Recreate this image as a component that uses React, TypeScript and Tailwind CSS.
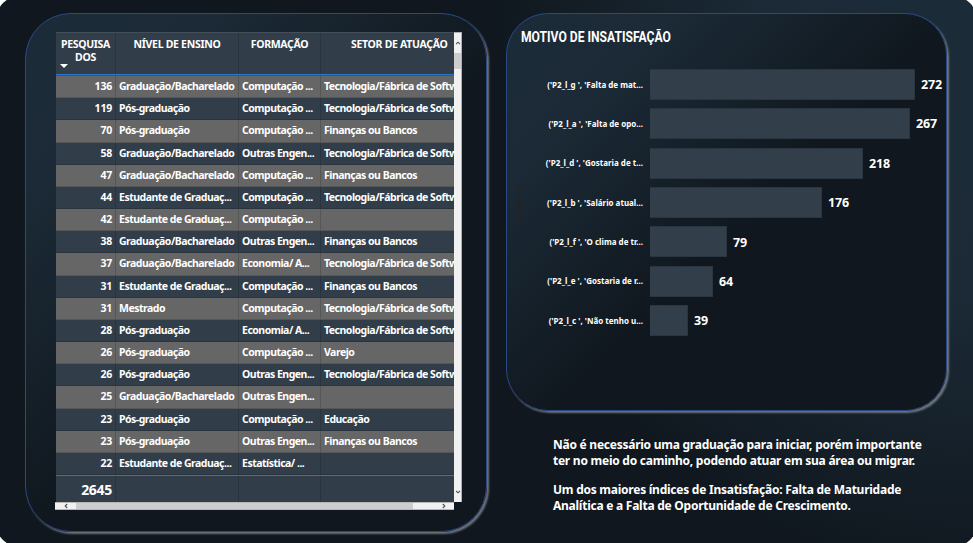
import React from "react";

type Row = [string, string, string, string];

const G = "Graduação/Bacharelado";
const P = "Pós-graduação";
const E = "Estudante de Graduaç...";
const C = "Computação ...";
const O = "Outras Engen...";
const T = "Tecnologia/Fábrica de Softw";
const F = "Finanças ou Bancos";

const rows: Row[] = [
  ["136", G, C, T],
  ["119", P, C, T],
  ["70", P, C, F],
  ["58", G, O, T],
  ["47", G, C, F],
  ["44", E, C, T],
  ["42", E, C, ""],
  ["38", G, O, F],
  ["37", G, "Economia/ A...", T],
  ["31", E, C, F],
  ["31", "Mestrado", C, T],
  ["28", P, "Economia/ A...", T],
  ["26", P, C, "Varejo"],
  ["26", P, O, T],
  ["25", G, O, ""],
  ["23", P, C, "Educação"],
  ["23", P, O, F],
  ["22", E, "Estatística/ ...", ""],
];

const bars = [
  { label: "('P2_l_g ', 'Falta de mat...", value: 272, width: 265 },
  { label: "('P2_l_a ', 'Falta de opo...", value: 267, width: 260 },
  { label: "('P2_l_d ', 'Gostaria de t...", value: 218, width: 213 },
  { label: "('P2_l_b ', 'Salário atual...", value: 176, width: 172 },
  { label: "('P2_l_f ', 'O clima de tr...", value: 79, width: 77 },
  { label: "('P2_l_e ', 'Gostaria de r...", value: 64, width: 63 },
  { label: "('P2_l_c ', 'Não tenho u...", value: 39, width: 38 },
];

const grid = "grid grid-cols-[60px_123px_82px_133px]";
const line = "border-r border-black/15";
const panel =
  "border border-[#2a4a86] bg-[linear-gradient(135deg,#1c2b38_0%,#1b2a36_20%,#10171e_54%,#10171e_100%)] shadow-[2px_2px_2px_rgba(140,143,150,0.75)]";

function Chevron({ className }: { className: string }) {
  return (
    <svg viewBox="0 0 6 4" className={"h-1 w-1.5 " + className} fill="none" stroke="#505050" strokeWidth="1.1">
      <path d="M1 3.2 3 1.2 5 3.2" />
    </svg>
  );
}

function Table() {
  return (
    <div className="grid h-[478px] w-[406px] grid-cols-[398px_8px] grid-rows-[470px_8px] text-[10.5px] font-bold text-white">
      <div className="flex flex-col overflow-hidden border-t border-[#43505a] bg-[#313e49]">
        <div className={grid + " h-[41px] shrink-0 text-center leading-[13px] tracking-[-0.3px]"}>
          <div className={line + " pt-[5px]"}>
            <div>PESQUISA</div>
            <div>DOS</div>
            <div className="ml-1 h-0 w-0 border-x-4 border-t-4 border-x-transparent border-t-white" />
          </div>
          <div className={line + " pt-[5px]"}>NÍVEL DE ENSINO</div>
          <div className={line + " pt-[5px]"}>FORMAÇÃO</div>
          <div className="whitespace-nowrap pl-[30px] pt-[5px] text-left">SETOR DE ATUAÇÃO</div>
        </div>
        <div className="h-px shrink-0 bg-[#2375cd]" />
        <div className="h-px shrink-0 bg-[#4c5257]" />
        <div className="flex h-[399px] shrink-0 flex-col">
          {rows.map((r, i) => (
            <div
              key={i}
              className={grid + " min-h-0 flex-1 items-stretch border-b border-black/15 leading-[21px] tracking-[-0.5px] " + (i % 2 ? "bg-[#313e49]" : "bg-[#666666]")}
            >
              <div className={line + " pr-[3px] text-right tracking-[-0.2px]"}>{r[0]}</div>
              <div className={line + " whitespace-nowrap pl-[3px]"}>{r[1]}</div>
              <div className={line + " whitespace-nowrap pl-[3px]"}>{r[2]}</div>
              <div className="overflow-hidden whitespace-nowrap pl-[3px]">{r[3]}</div>
            </div>
          ))}
        </div>
        <div className="h-px shrink-0 bg-[#2375cd]" />
        <div className={grid + " flex-1 text-[14px] leading-[28px] tracking-[-0.3px]"}>
          <div className={line + " pr-[3px] text-right"}>2645</div>
          <div className={line} />
          <div className={line} />
          <div />
        </div>
      </div>
      <div className="flex flex-col items-center border-r border-t border-[#b0b0b0] bg-[#f1f1f1]">
        <div className="flex h-[20px] items-center">
          <Chevron className="" />
        </div>
        <div className="h-4 w-full bg-[#cdcdcd]" />
        <div className="flex-1" />
        <div className="flex h-[20px] items-center">
          <Chevron className="rotate-180" />
        </div>
      </div>
      <div className="-ml-px flex items-center border-y border-[#b8b8b8] bg-[#f1f1f1]">
        <div className="flex w-[21px] justify-center">
          <Chevron className="-rotate-90" />
        </div>
        <div className="h-full w-[337px] bg-[#cdcdcd]" />
        <div className="flex flex-1 justify-end pr-[7px]">
          <Chevron className="rotate-90" />
        </div>
      </div>
    </div>
  );
}

export default function App() {
  return (
    <div className="h-[543px] w-[973px] overflow-hidden bg-white font-['Noto_Sans','Open_Sans',sans-serif]">
      <div className="-ml-1 -mt-1 flex h-[551px] w-[981px] gap-[19px] rounded-[24px] bg-[#10171e] bg-[radial-gradient(ellipse_490px_520px_at_100%_12%,#1c2b38_0%,#1b2a36_45%,#10171e_100%)] pl-[29px] pt-[17px]">
        <div className={panel + " h-[519px] w-[462px] shrink-0 rounded-[46px] pl-[30px] pt-[18px]"}>
          <Table />
        </div>
        <div className="w-[441px] text-white">
          <div className={panel + " h-[398px] rounded-[42px]"}>
            <h1 className="ml-[14px] mt-[14px] h-[18px] origin-left scale-x-[0.865] whitespace-nowrap font-['Roboto',sans-serif] text-[14px] font-bold leading-[18px]">
              MOTIVO DE INSATISFAÇÃO
            </h1>
            <div className="mt-[23px] flex">
              <div className="flex w-[28px] rotate-180 items-center justify-center text-[10.5px] text-[#252423] [writing-mode:vertical-rl]">
                Atributo
              </div>
              <div className="flex flex-col gap-[8.35px]">
                {bars.map((b) => (
                  <div key={b.label} className="flex h-[31px] items-center">
                    <div className="w-[108px] whitespace-pre text-right text-[8px] font-bold">{b.label}</div>
                    <div className="ml-[7px] h-full border border-l-0 border-[#293641] bg-[#323f4a]" style={{ width: b.width }} />
                    <div className="ml-1.5 pt-[2px] text-[12.5px] font-bold tracking-[-0.2px]">{b.value}</div>
                  </div>
                ))}
              </div>
            </div>
          </div>
          <div className="ml-[47px] mt-[26px] whitespace-nowrap text-[12px] font-bold leading-4 tracking-[-0.25px]">
            <p>Não é necessário uma graduação para iniciar, porém importante</p>
            <p>ter no meio do caminho, podendo atuar em sua área ou migrar.</p>
            <p className="mt-[13px]">Um dos maiores índices de Insatisfação: Falta de Maturidade</p>
            <p>Analítica e a Falta de Oportunidade de Crescimento.</p>
          </div>
        </div>
      </div>
    </div>
  );
}
